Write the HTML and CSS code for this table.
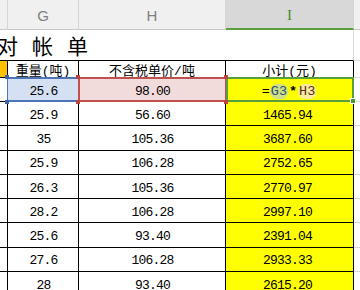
FILE: index.html
```html
<!DOCTYPE html>
<html>
<head>
<meta charset="utf-8">
<link rel="stylesheet" href="styles.css">
</head>
<body>
<div class="sheet">
  <div class="ch"></div>
  <div class="ch">G</div>
  <div class="ch">H</div>
  <div class="ch active">I</div>
  <div class="ch last"></div>

  <div class="title"><span class="title-text">对帐单</span></div>
  <div class="g"></div>

  <div class="c orange"></div>
  <div class="c">重量(吨)</div>
  <div class="c">不含税单价/吨</div>
  <div class="c">小计(元)</div>
  <div class="g"></div>

  <div class="c"></div>
  <div class="c num ref-g"><span>25.6</span><i class="h tl"></i><i class="h bl"></i></div>
  <div class="c num ref-h"><span>98.00</span><i class="h tl"></i><i class="h tr"></i><i class="h bl"></i><i class="h br"></i></div>
  <div class="c num sel"><span class="formula">=<b class="rg">G3</b><span class="star">*</span><b class="rh">H3</b></span><i class="h br"></i></div>
  <div class="g"></div>

  <div class="c"></div><div class="c num">25.9</div><div class="c num">56.60</div><div class="c num y">1465.94</div><div class="g"></div>
  <div class="c"></div><div class="c num">35</div><div class="c num">105.36</div><div class="c num y">3687.60</div><div class="g"></div>
  <div class="c"></div><div class="c num">25.9</div><div class="c num">106.28</div><div class="c num y">2752.65</div><div class="g"></div>
  <div class="c"></div><div class="c num">26.3</div><div class="c num">105.36</div><div class="c num y">2770.97</div><div class="g"></div>
  <div class="c"></div><div class="c num">28.2</div><div class="c num">106.28</div><div class="c num y">2997.10</div><div class="g"></div>
  <div class="c"></div><div class="c num">25.6</div><div class="c num">93.40</div><div class="c num y">2391.04</div><div class="g"></div>
  <div class="c"></div><div class="c num">27.6</div><div class="c num">106.28</div><div class="c num y">2933.33</div><div class="g"></div>
  <div class="c"></div><div class="c num">28</div><div class="c num">93.40</div><div class="c num y">2615.20</div><div class="g"></div>
</div>
</body>
</html>
```
FILE: styles.css
```css
html, body {
  margin: 0;
  padding: 0;
  background: #fff;
}

.sheet {
  display: grid;
  grid-template-columns: 8px 71px 147px 128px 1fr;
  grid-template-rows: 30px 31px 17px 24px repeat(8, 24.3px);
  width: 360px;
  height: 290px;
  overflow: hidden;
  font-family: "Liberation Mono", "Noto Sans CJK SC", monospace;
  font-size: 13px;
  color: #000;
}

.ch {
  box-sizing: border-box;
  background: #f0f0f0;
  border-right: 1px solid #d4d4d4;
  border-bottom: 1px solid #c8c8c8;
  display: flex;
  align-items: center;
  justify-content: center;
  font-family: "Liberation Sans", sans-serif;
  font-size: 15px;
  color: #808080;
  padding-top: 2px;
}

.ch.last {
  border-right: none;
}

.ch.active {
  background: #d8d8d8;
  color: #3f8f2e;
  border-bottom: 2px solid #5a9e3e;
  font-family: "Liberation Serif", serif;
  padding-top: 3px;
}

.title {
  grid-column: 1 / 5;
  box-sizing: border-box;
  border-right: 1px solid #dadada;
  border-bottom: 1px solid #000;
  display: flex;
  align-items: flex-end;
  padding-bottom: 2px;
  overflow: hidden;
}

.title-text {
  margin-left: -3px;
  font-family: "Noto Sans CJK SC", sans-serif;
  font-size: 21px;
  line-height: 26px;
  letter-spacing: 14px;
}

.g {
  box-sizing: border-box;
  border-bottom: 1px solid #dadada;
}

.c {
  box-sizing: border-box;
  border-right: 1px solid #000;
  border-bottom: 1px solid #000;
  display: flex;
  align-items: center;
  justify-content: center;
  position: relative;
  white-space: nowrap;
}

.num {
  letter-spacing: -0.8px;
  padding-top: 3px;
  padding-left: 1px;
}

.orange {
  background: #ffc000;
}

.y {
  background: #ffff00;
  padding-left: 0;
  padding-right: 4px;
}

.ref-g {
  background: #d5e0f3;
}

.ref-g::after,
.ref-h::after,
.sel::after {
  content: "";
  position: absolute;
  top: -1px;
  left: -1px;
  right: -1px;
  bottom: -1px;
  border: 2px solid #4d74b8;
  border-left-width: 1px;
  border-right-width: 1px;
}

.ref-h {
  background: #f2dcdb;
}

.ref-h::after {
  border-color: #c0504d;
  border-left-width: 2px;
}

.sel {
  background: #ffff00;
  padding-right: 2px;
}

.sel::after {
  border-color: #5aa03a;
  border-width: 2px;
  left: 0;
  right: -1px;
}

.h {
  position: absolute;
  width: 4px;
  height: 4px;
  z-index: 2;
}

.ref-g .h { background: #3f64a8; }
.ref-h .h { background: #b8433f; }
.sel .h { background: #4c9a2c; border: 1px solid #fff; width: 4px; height: 4px; }

.h.tl { top: -3px; left: -3px; }
.h.tr { top: -3px; right: -3px; }
.h.bl { bottom: -3px; left: -3px; }
.h.br { bottom: -3px; right: -3px; }

.formula {
  letter-spacing: 0;
  font-size: 13.5px;
}

.formula b {
  font-weight: normal;
  border-radius: 7px;
  padding: 0 1px;
}

.star {
  font-weight: bold;
  padding: 0 1px;
}

.rg {
  background: #cfe08a;
  color: #2f4f6a;
}

.rh {
  background: #f7ec9e;
  color: #5a2a20;
}

.ref-g span, .ref-h span, .formula {
  position: relative;
  z-index: 1;
}
```
